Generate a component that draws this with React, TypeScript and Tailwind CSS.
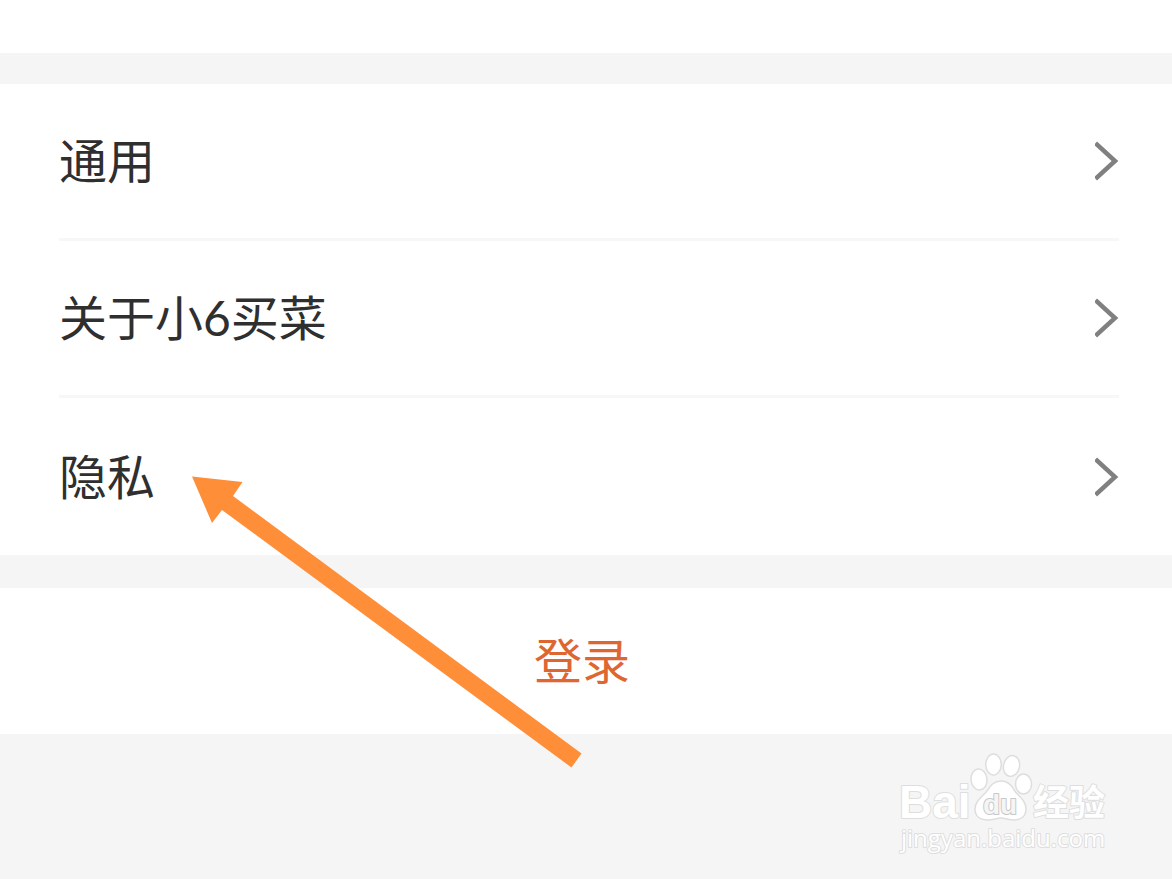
import React from 'react';

interface SettingRowProps {
  /** Text shown at the left of the row */
  label: string;
}

/**
 * Entries of the settings group, top to bottom
 */
const settings: string[] = ['通用', '关于小6买菜', '隐私'];

/**
 * Chevron at the right end of a row
 */
const Chevron: React.FC = () => (
  <svg
    className="h-10 w-6 shrink-0"
    viewBox="0 0 24 40"
    fill="none"
    stroke="#808080"
    strokeWidth={4.5}
    aria-hidden="true"
  >
    <path d="M0.5 2.2 L20 20 L0.5 37.8" />
  </svg>
);

/**
 * One tappable row of the settings group
 */
const SettingRow: React.FC<SettingRowProps> = ({ label }) => (
  <button type="button" className="flex h-full w-full items-center justify-between text-left">
    <span className="text-[48px] leading-[72px] text-[#2f2f2f]">{label}</span>
    <Chevron />
  </button>
);

/**
 * Arrow that points at the privacy row
 */
const PointerArrow: React.FC = () => (
  <svg
    className="pointer-events-none absolute left-[190px] top-[474px] h-[296px] w-[394px]"
    viewBox="190 474 394 296"
    fill="#ff8e39"
    aria-hidden="true"
  >
    <path d="M192 476.5 L242.5 482 L233 496 L581.5 753.5 L571.5 767.5 L222 510 L212 523 Z" />
  </svg>
);

/**
 * Watermark with the paw logo and site address
 */
const Watermark: React.FC = () => (
  <svg
    className="pointer-events-none absolute bottom-[14px] right-[52px] h-[125px] w-[240px] font-['Open_Sans',sans-serif]"
    viewBox="880 740 240 125"
    fill="#ffffff"
    stroke="#dedede"
    strokeWidth={2}
    strokeLinejoin="round"
  >
    <g strokeWidth={1.5}>
      <ellipse cx="979" cy="779.5" rx="8" ry="10.5" transform="rotate(-6 979 779.5)" />
      <ellipse cx="993.5" cy="764.5" rx="7.8" ry="10.5" />
      <ellipse cx="1011.5" cy="766" rx="8" ry="10.5" transform="rotate(12 1011.5 766)" />
      <ellipse cx="1023.5" cy="784" rx="8" ry="10" />
      <path d="M1001 781 C1007 781 1011 784 1014 790 C1018 796 1026 800 1026 809 C1026 817 1020 820 1014 820 C1009 820 1005 818 1001 818 C997 818 993 820 988 820 C981 820 975 817 975 809 C975 801 982 797 987 791 C991 785 994 781 1001 781 Z" />
    </g>
    <g className="[paint-order:stroke]">
      <text x="899" y="818" fontSize="46" fontWeight="700" className="font-['Liberation_Sans',sans-serif]">Bai</text>
      <text x="983" y="814" fontSize="28" fontWeight="700" fill="#f5f5f5" stroke="#c8c8c8" className="font-['Liberation_Sans',sans-serif]">du</text>
      <text x="1033" y="816" fontSize="36" fontWeight="700" className="font-['Liberation_Sans','Noto_Sans_CJK_SC',sans-serif]">经验</text>
      <text x="901" y="847" fontSize="24" fontWeight="400">jingyan.baidu.com</text>
    </g>
  </svg>
);

export default function App() {
  return (
    <div className="relative min-h-screen bg-[#f5f5f5] font-['Lato','Noto_Sans_CJK_SC',sans-serif]">
      <div className="h-[53px] bg-white" />

      {/* Settings group */}
      <main className="pt-[31px]">
        <ul className="divide-y-[3px] divide-[#f7f7f7] bg-white [&>li]:mr-[53px] [&>li]:ml-[59px] [&>li]:h-[157px]">
          {settings.map((label) => (
            <li key={label}>
              <SettingRow label={label} />
            </li>
          ))}
        </ul>

        {/* Login */}
        <button
          type="button"
          className="mt-[33px] flex h-[146px] w-full items-center justify-center bg-white pr-2 text-[48px] leading-[72px] text-[#de6631]"
        >
          登录
        </button>
      </main>

      <PointerArrow />
      <Watermark />
    </div>
  );
}
